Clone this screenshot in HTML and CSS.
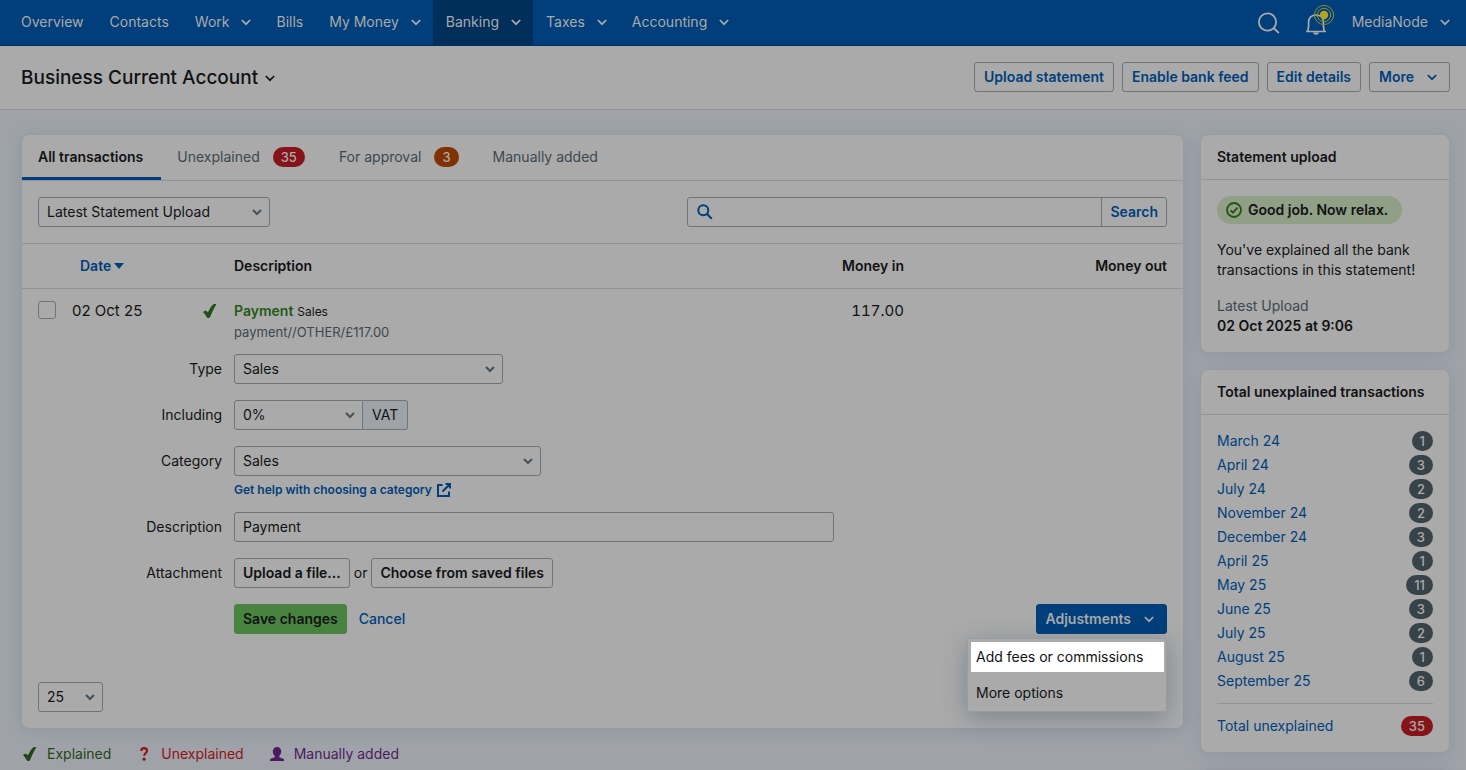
FILE: index.html
```html
<!DOCTYPE html>
<html lang="en">
<head>
<meta charset="utf-8">
<meta name="viewport" content="width=device-width, initial-scale=1">
<title>Business Current Account</title>
<link rel="stylesheet" href="styles.css">
</head>
<body>
<svg class="sprite" aria-hidden="true">
  <symbol id="chevron" viewBox="0 0 12 12"><path d="M1.8 4 6 8.2 10.2 4" fill="none" stroke="currentColor" stroke-width="1.7"/></symbol>
  <symbol id="chevron-bold" viewBox="0 0 12 12"><path d="M2 4 6 8 10 4" fill="none" stroke="currentColor" stroke-width="2.2"/></symbol>
  <symbol id="tick" viewBox="0 0 16 16"><path d="M1.2 9.6C1.7 8 3.400 7.300 4.700 8.200c.6.4.9.8 1.100 1.400C7.400 6.400 9.200 3 11.500 1.300c.8-.6 2-.5 2.900 0C12.200 4.800 9.900 9.500 8 14.200c-.5 1-2.900 1-3.400 0C3.700 12.400 2.700 10.800 1.200 9.600Z" fill="currentColor"/></symbol>
</svg>

<nav class="nav" aria-label="Main">
  <a class="nav-item" href="#">Overview</a>
  <a class="nav-item" href="#">Contacts</a>
  <a class="nav-item" href="#">Work <svg class="chevron"><use href="#chevron"/></svg></a>
  <a class="nav-item" href="#">Bills</a>
  <a class="nav-item" href="#">My Money <svg class="chevron"><use href="#chevron"/></svg></a>
  <a class="nav-item nav-item-active" href="#">Banking <svg class="chevron"><use href="#chevron"/></svg></a>
  <a class="nav-item" href="#">Taxes <svg class="chevron"><use href="#chevron"/></svg></a>
  <a class="nav-item" href="#">Accounting <svg class="chevron"><use href="#chevron"/></svg></a>
  <div class="nav-tools">
    <button class="nav-icon" type="button" aria-label="Search">
      <svg width="24" height="24" viewBox="0 0 24 24" fill="none" stroke="currentColor" stroke-width="1.800"><circle cx="10.500" cy="11" r="8.600"/><path d="m16.500 17 5.400 5"/></svg>
    </button>
    <button class="nav-icon" type="button" aria-label="Notifications">
      <svg width="34" height="40" viewBox="0 0 34 40" fill="none">
        <path d="M5 28.500h20M7 28c0-2 .6-3 .6-6v-3c0-4.200 3-7 7.400-7s7.400 2.800 7.400 7v3c0 3 .6 4 .6 6" stroke="currentColor" stroke-width="1.700"/>
        <path d="M12 29.500h6c-.4 1.500-1.500 2.200-3 2.200s-2.600-.7-3-2.200Z" fill="currentColor"/>
        <circle cx="23" cy="12" r="4.200" fill="#b3a41c"/>
        <circle cx="23" cy="12" r="6.700" stroke="#8e9030"/>
        <circle cx="23" cy="12" r="9.500" stroke="#8e9030"/>
      </svg>
    </button>
    <a class="nav-item" href="#">MediaNode <svg class="chevron"><use href="#chevron"/></svg></a>
  </div>
</nav>

<header class="page-header">
  <h1 class="title">Business Current Account <svg class="chevron"><use href="#chevron"/></svg></h1>
  <div class="header-actions">
    <button class="btn btn-link" type="button">Upload statement</button>
    <button class="btn btn-link" type="button">Enable bank feed</button>
    <button class="btn btn-link" type="button">Edit details</button>
    <button class="btn btn-link btn-menu" type="button">More <svg class="chevron"><use href="#chevron"/></svg></button>
  </div>
</header>

<div class="layout">
  <main class="main">
    <section class="card">
      <div class="tabs">
        <a class="tab tab-active" href="#">All transactions</a>
        <a class="tab" href="#">Unexplained <span class="badge badge-red">35</span></a>
        <a class="tab" href="#">For approval <span class="badge badge-orange">3</span></a>
        <a class="tab" href="#">Manually added</a>
      </div>

      <div class="toolbar">
        <div class="select select-filter">
          <select aria-label="Filter transactions"><option>Latest Statement Upload</option></select>
          <svg class="arrow"><use href="#chevron-bold"/></svg>
        </div>
        <form class="search">
          <svg class="search-icon" viewBox="0 0 16 16" fill="none" stroke="currentColor" stroke-width="2"><circle cx="6.300" cy="6.300" r="5"/><path d="m9.800 9.800 5 5"/></svg>
          <input class="search-input" type="search" aria-label="Search transactions">
          <button class="search-button" type="button">Search</button>
        </form>
      </div>

      <table class="table">
        <colgroup><col class="col-check"><col class="col-date"><col class="col-status"><col><col class="col-in"><col class="col-out"></colgroup>
        <thead>
          <tr>
            <th></th>
            <th><a class="sort" href="#">Date <svg width="10" height="6" viewBox="0 0 10 6"><path d="M0 0h10L5 6Z" fill="currentColor"/></svg></a></th>
            <th></th>
            <th>Description</th>
            <th class="num">Money in</th>
            <th class="num">Money out</th>
          </tr>
        </thead>
        <tbody>
          <tr>
            <td class="cell-check"><input class="check" type="checkbox" aria-label="Select transaction"></td>
            <td class="figure">02 Oct 25</td>
            <td class="cell-status"><svg class="tick"><use href="#tick"/></svg></td>
            <td><a class="payment" href="#">Payment</a> <span class="kind">Sales</span><div class="reference">payment//OTHER/£117.00</div></td>
            <td class="num figure amount">117.00</td>
            <td></td>
          </tr>
        </tbody>
      </table>

      <form class="form">
        <label class="label" for="type">Type</label>
        <div class="field">
          <div class="select select-type"><select id="type"><option>Sales</option></select><svg class="arrow"><use href="#chevron-bold"/></svg></div>
        </div>
        <label class="label" for="vat">Including</label>
        <div class="field field-joined">
          <div class="select select-vat"><select id="vat"><option>0%</option></select><svg class="arrow"><use href="#chevron-bold"/></svg></div>
          <span class="addon">VAT</span>
        </div>
        <label class="label" for="category">Category</label>
        <div class="field field-stacked">
          <div class="select select-category"><select id="category"><option>Sales</option></select><svg class="arrow"><use href="#chevron-bold"/></svg></div>
          <a class="help" href="#">Get help with choosing a category
            <svg width="14" height="14" viewBox="0 0 14 14" fill="none" stroke="currentColor" stroke-width="2"><path d="M5.500 2H1v11h11V8.500M8.500 1H13v4.500M13 1 5.500 8.500"/></svg>
          </a>
        </div>
        <label class="label" for="description">Description</label>
        <div class="field"><input class="text-input" id="description" type="text" value="Payment"></div>
        <label class="label" for="upload">Attachment</label>
        <div class="field field-attach">
          <button class="btn" id="upload" type="button">Upload a file...</button>
          <span>or</span>
          <button class="btn" type="button">Choose from saved files</button>
        </div>
        <div class="form-actions">
          <button class="btn btn-save" type="button">Save changes</button>
          <a class="cancel" href="#">Cancel</a>
          <div class="adjust">
            <button class="btn btn-primary btn-menu" type="button" aria-expanded="true">Adjustments <svg class="chevron"><use href="#chevron"/></svg></button>
            <div class="menu">
              <a class="menu-item menu-item-active" href="#">Add fees or commissions</a>
              <a class="menu-item" href="#">More options</a>
            </div>
          </div>
        </div>
      </form>

      <div class="pager">
        <div class="select select-page"><select aria-label="Rows per page"><option>25</option></select><svg class="arrow"><use href="#chevron-bold"/></svg></div>
      </div>
    </section>

    <div class="legend">
      <span class="legend-item legend-explained"><svg class="tick"><use href="#tick"/></svg>Explained</span>
      <span class="legend-item legend-unexplained"><svg width="16" height="14" viewBox="0 0 16 14"><path d="M5.200 4C5.200 2 6.400 1.200 8 1.200S11 2.100 11 3.800c0 2.300-2.800 2.200-2.800 5" fill="none" stroke="currentColor" stroke-width="2.200"/><circle cx="8.100" cy="12.200" r="1.600" fill="currentColor"/></svg>Unexplained</span>
      <span class="legend-item legend-manual"><svg width="16" height="14" viewBox="0 0 16 14"><path d="M8 0c2.500 0 4.200 1.700 4.200 4.200 0 2-.8 3.800-2 4.700v1.300c1.600.7 4.300 1.100 4.800 2.300V14H1v-1.500c.5-1.200 3.200-1.600 4.800-2.300V8.900c-1.200-.9-2-2.700-2-4.700C3.800 1.700 5.500 0 8 0Z" fill="currentColor"/></svg>Manually added</span>
    </div>
  </main>

  <aside class="sidebar">
    <section class="card">
      <h2 class="card-title">Statement upload</h2>
      <div class="status">
        <div class="pill"><svg width="16" height="16" viewBox="0 0 16 16" fill="none" stroke="currentColor" stroke-width="1.800"><circle cx="8" cy="8" r="7"/><path d="m4.600 8.300 2.300 2.300 4.600-5"/></svg>Good job. Now relax.</div>
        <p>You've explained all the bank transactions in this statement!</p>
        <div><span class="muted">Latest Upload</span><br><strong>02 Oct 2025 at 9:06</strong></div>
      </div>
    </section>
    <section class="card">
      <h2 class="card-title">Total unexplained transactions</h2>
      <div class="months">
        <div class="month"><a href="#">March 24</a><span class="badge">1</span></div>
        <div class="month"><a href="#">April 24</a><span class="badge">3</span></div>
        <div class="month"><a href="#">July 24</a><span class="badge">2</span></div>
        <div class="month"><a href="#">November 24</a><span class="badge">2</span></div>
        <div class="month"><a href="#">December 24</a><span class="badge">3</span></div>
        <div class="month"><a href="#">April 25</a><span class="badge">1</span></div>
        <div class="month"><a href="#">May 25</a><span class="badge">11</span></div>
        <div class="month"><a href="#">June 25</a><span class="badge">3</span></div>
        <div class="month"><a href="#">July 25</a><span class="badge">2</span></div>
        <div class="month"><a href="#">August 25</a><span class="badge">1</span></div>
        <div class="month"><a href="#">September 25</a><span class="badge">6</span></div>
        <hr class="rule">
        <div class="month"><a href="#">Total unexplained</a><span class="badge badge-red">35</span></div>
      </div>
    </section>
    <section class="card card-next"></section>
  </aside>
</div>
</body>
</html>
```
FILE: styles.css
```css
:root {
  --text: #101213;
  --muted: #3c484f;
  --blue: #003f7b;
  --surface: #aaaaaa;
  --line: #919497;
  --control: #6d757a;
  --light: #aaaaaa;
}
* { box-sizing: border-box; }
body {
  margin: 0;
  height: 100vh;
  overflow: hidden;
  background: #9fa3a9;
  color: var(--text);
  font: 14px/20px Inter, "Liberation Sans", sans-serif;
}
a { color: var(--blue); text-decoration: none; }
button, input, select { font: inherit; color: inherit; margin: 0; }
button { cursor: pointer; }
.sprite { display: none; }
.chevron { width: 12px; height: 12px; flex: none; }

.nav {
  display: flex;
  height: 46px;
  padding: 0 4px 0 8px;
  background: var(--blue);
  border-bottom: 1px solid #002f5c;
}
.nav-item {
  display: flex;
  align-items: center;
  gap: 11px;
  padding: 0 13px 1px;
  color: var(--light);
}
.nav-item .chevron { margin-right: -2px; }
.nav-item-active { background: #002f5c; }
.nav-tools { display: flex; align-items: center; margin-left: auto; }
.nav-icon { display: flex; padding: 0 4px 0 16px; border: 0; background: none; color: var(--light); }

.page-header {
  display: flex;
  align-items: center;
  justify-content: space-between;
  height: 64px;
  padding: 0 16px 1px 21px;
  background: var(--surface);
  border-bottom: 1px solid var(--line);
}
.title { display: flex; align-items: center; gap: 6px; margin: 0; padding-top: 2px; font-size: 19px; line-height: 24px; font-weight: 500; }
.header-actions { display: flex; gap: 8px; }

.btn {
  display: flex;
  align-items: center;
  height: 30px;
  padding: 0 8px;
  border: 1px solid var(--control);
  border-radius: 3px;
  background: var(--surface);
  font-weight: 600;
  white-space: nowrap;
}
.btn-link { padding: 0 9px; color: var(--blue); }
.btn-menu { gap: 12px; padding-right: 11px; }
.btn-save { background: #48843f; border-color: #48843f; }
.btn-primary { background: var(--blue); border-color: var(--blue); color: var(--light); }

.layout { display: grid; grid-template-columns: minmax(0, 1fr) 250px; gap: 16px; padding: 24px 16px 0 21px; }
.card {
  background: var(--surface);
  border: 1px solid #979aa0;
  border-radius: 8px;
  box-shadow: 0 2px 16px rgba(60, 80, 115, 0.14);
}

.tabs { display: flex; height: 46px; border-bottom: 1px solid var(--line); }
.tab { display: flex; align-items: center; gap: 13px; padding: 0 18px 0 16px; border-top: 2px solid transparent; border-bottom: 3px solid transparent; color: var(--muted); }
.tab-active { color: var(--text); font-weight: 600; border-bottom-color: var(--blue); }
.badge {
  padding: 0 8px;
  border-radius: 10px;
  background: #374349;
  color: var(--light);
  font-size: 13px;
  line-height: 20px;
  font-weight: 500;
}
.badge-red { background: #861317; }
.badge-orange { background: #803300; }

.toolbar { display: flex; justify-content: space-between; padding: 16px; border-bottom: 1px solid var(--line); }
.select { display: grid; height: 30px; }
.select > * { grid-area: 1 / 1; }
.select select {
  appearance: none;
  width: 100%;
  padding: 0 24px 0 8px;
  border: 1px solid var(--control);
  border-radius: 3px;
  background: var(--surface);
}
.arrow { width: 12px; height: 12px; margin-right: 7px; place-self: center end; color: #46535b; pointer-events: none; }
.select-filter { width: 232px; }
.select-type { width: 269px; }
.select-vat { width: 129px; }
.select-category { width: 307px; }
.select-page { width: 65px; }

.search { display: flex; align-items: center; width: 480px; height: 30px; border: 1px solid var(--control); border-radius: 3px; }
.search-icon { width: 16px; height: 16px; margin-left: 9px; flex: none; color: var(--blue); }
.search-input { flex: 1; min-width: 0; height: 28px; border: 0; background: none; }
.search-button { height: 28px; padding: 0 8px; border: 0; border-left: 1px solid var(--control); background: none; color: var(--blue); font-weight: 600; }

.table { width: 100%; table-layout: fixed; border-collapse: collapse; }
.col-check { width: 50px; }
.col-date { width: 130px; }
.col-status { width: 32px; }
.col-in { width: 180px; }
.col-out { width: 263px; }
.table th { height: 44px; padding: 0; border-bottom: 1px solid var(--line); text-align: left; font-weight: 600; }
.table td { padding: 12px 0 0; vertical-align: top; }
.table .num { padding-right: 16px; text-align: right; }
.table .figure { font-size: 15px; }
.amount { font-variant-numeric: tabular-nums; }
.sort { display: flex; align-items: center; gap: 3px; padding-left: 8px; }
.table .cell-check { padding-left: 16px; }
.check { appearance: none; display: block; width: 18px; height: 18px; border: 1px solid var(--control); border-radius: 3px; }
.tick { display: block; width: 16px; height: 16px; }
.table .cell-status { padding-top: 14px; color: #1f5210; }
.payment { color: #245916; font-weight: 600; }
.kind { font-size: 12px; }
.reference { color: var(--muted); font-size: 13px; }

.form {
  display: grid;
  grid-template-columns: 184px minmax(0, 1fr);
  gap: 16px 12px;
  padding: 12px 16px 0;
}
.label { line-height: 30px; text-align: right; }
.field { display: flex; }
.field-joined { align-items: center; }
.field-joined select { border-radius: 3px 0 0 3px; }
.addon { height: 30px; padding: 0 9px; border: 1px solid var(--control); border-left: 0; border-radius: 0 3px 3px 0; background: #9fa3a8; line-height: 28px; }
.field-stacked { flex-direction: column; gap: 4px; }
.help { display: flex; align-items: center; gap: 5px; height: 16px; margin-top: 2px; margin-bottom: -2px; font-size: 12px; font-weight: 600; }
.text-input { width: 600px; height: 30px; padding: 0 8px; border: 1px solid var(--control); border-radius: 3px; background: var(--surface); }
.field-attach { align-items: center; gap: 4px; }
.form-actions { grid-column: 2; display: flex; align-items: center; gap: 12px; }
.cancel { font-weight: 500; }
.adjust { position: relative; margin-left: auto; }
.menu {
  position: absolute;
  top: 34px;
  right: 0;
  z-index: 2;
  display: grid;
  gap: 6px;
  width: 200px;
  padding: 3px 2px 3px 3px;
  background: var(--surface);
  border: 1px solid #999ca0;
  border-radius: 3px;
  box-shadow: 0 6px 24px rgba(40, 65, 95, 0.35);
}
.menu-item { padding: 0 5px; color: var(--text); line-height: 30px; white-space: nowrap; }
.menu-item-active { background: #ffffff; }

.pager { padding: 48px 16px 16px; }

.legend { display: flex; gap: 25px; padding: 15px 0 0 1px; }
.legend-item { display: flex; align-items: center; gap: 9px; }
.legend-explained { color: #1f4714; }
.legend-unexplained { color: #8e1216; }
.legend-manual { color: #4c1a5e; }

.sidebar { display: flex; flex-direction: column; gap: 16px; }
.card-title { margin: 0; padding: 12px 16px; border-bottom: 1px solid var(--line); font-size: 14px; line-height: 20px; font-weight: 600; }
.status { display: grid; gap: 16px; justify-items: start; padding: 16px; }
.status p { margin: 0; }
.status strong { font-weight: 600; }
.pill { display: flex; align-items: center; gap: 6px; padding: 4px 14px 4px 9px; border-radius: 14px; background: #909f86; font-weight: 600; }
.pill svg { color: #22530f; }
.muted { color: var(--muted); }
.months { padding: 14px 16px; }
.month { display: flex; align-items: center; justify-content: space-between; height: 24px; }
.rule { margin: 10px 0; border: 0; border-top: 1px solid var(--line); }
.card-next { height: 64px; }
```
